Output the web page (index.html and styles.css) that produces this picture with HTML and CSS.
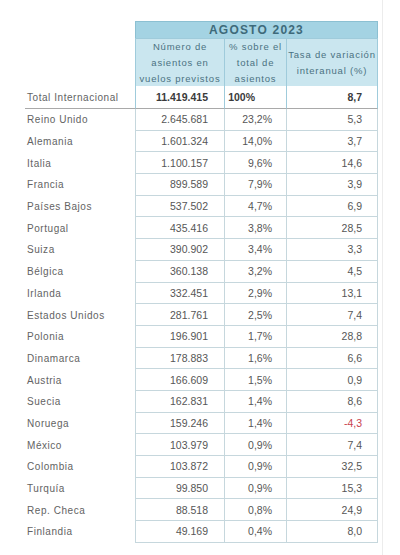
FILE: index.html
```html
<!DOCTYPE html>
<html lang="es">
<head>
<meta charset="utf-8">
<title>Agosto 2023</title>
<link rel="stylesheet" href="styles.css">
</head>
<body>
<div class="page">
  <div class="sheet">
    <div class="corner"></div>
    <div class="month">AGOSTO 2023</div>
    <div class="sub">Número de<br>asientos en<br>vuelos previstos</div>
    <div class="sub">% sobre el<br>total de<br>asientos</div>
    <div class="sub">Tasa de variación<br>interanual (%)</div>

    <div class="lab total-lab">Total Internacional</div>
    <div class="num c1 total">11.419.415</div>
    <div class="num c2 total pct100">100%</div>
    <div class="num c3 total">8,7</div>

    <div class="lab">Reino Unido</div><div class="num c1">2.645.681</div><div class="num c2">23,2%</div><div class="num c3">5,3</div>
    <div class="lab">Alemania</div><div class="num c1">1.601.324</div><div class="num c2">14,0%</div><div class="num c3">3,7</div>
    <div class="lab">Italia</div><div class="num c1">1.100.157</div><div class="num c2">9,6%</div><div class="num c3">14,6</div>
    <div class="lab">Francia</div><div class="num c1">899.589</div><div class="num c2">7,9%</div><div class="num c3">3,9</div>
    <div class="lab">Países Bajos</div><div class="num c1">537.502</div><div class="num c2">4,7%</div><div class="num c3">6,9</div>
    <div class="lab">Portugal</div><div class="num c1">435.416</div><div class="num c2">3,8%</div><div class="num c3">28,5</div>
    <div class="lab">Suiza</div><div class="num c1">390.902</div><div class="num c2">3,4%</div><div class="num c3">3,3</div>
    <div class="lab">Bélgica</div><div class="num c1">360.138</div><div class="num c2">3,2%</div><div class="num c3">4,5</div>
    <div class="lab">Irlanda</div><div class="num c1">332.451</div><div class="num c2">2,9%</div><div class="num c3">13,1</div>
    <div class="lab">Estados Unidos</div><div class="num c1">281.761</div><div class="num c2">2,5%</div><div class="num c3">7,4</div>
    <div class="lab">Polonia</div><div class="num c1">196.901</div><div class="num c2">1,7%</div><div class="num c3">28,8</div>
    <div class="lab">Dinamarca</div><div class="num c1">178.883</div><div class="num c2">1,6%</div><div class="num c3">6,6</div>
    <div class="lab">Austria</div><div class="num c1">166.609</div><div class="num c2">1,5%</div><div class="num c3">0,9</div>
    <div class="lab">Suecia</div><div class="num c1">162.831</div><div class="num c2">1,4%</div><div class="num c3">8,6</div>
    <div class="lab">Noruega</div><div class="num c1">159.246</div><div class="num c2">1,4%</div><div class="num c3 neg">-4,3</div>
    <div class="lab">México</div><div class="num c1">103.979</div><div class="num c2">0,9%</div><div class="num c3">7,4</div>
    <div class="lab">Colombia</div><div class="num c1">103.872</div><div class="num c2">0,9%</div><div class="num c3">32,5</div>
    <div class="lab">Turquía</div><div class="num c1">99.850</div><div class="num c2">0,9%</div><div class="num c3">15,3</div>
    <div class="lab">Rep. Checa</div><div class="num c1">88.518</div><div class="num c2">0,8%</div><div class="num c3">24,9</div>
    <div class="lab">Finlandia</div><div class="num c1">49.169</div><div class="num c2">0,4%</div><div class="num c3">8,0</div>
  </div>
</div>
</body>
</html>
```

FILE: styles.css
```css
html, body {
  margin: 0;
  padding: 0;
  background: #ffffff;
}

.page {
  width: 383px;
  height: 555px;
  box-sizing: border-box;
  border-right: 1px solid #ececec;
  padding-top: 21px;
  padding-left: 25px;
}

.sheet {
  display: grid;
  grid-template-columns: 110px 90px 62px 91px;
  grid-template-rows: 17px 48px 23px;
  grid-auto-rows: 21.7px;
  font-family: "Liberation Sans", Arial, sans-serif;
}

.corner {
  grid-column: 1;
  grid-row: 1 / span 2;
}

.month {
  grid-column: 2 / span 3;
  box-sizing: border-box;
  background: #a4d3e3;
  border: 1px solid #8cc0d2;
  border-bottom: none;
  color: #3e6a7a;
  font-size: 12px;
  font-weight: bold;
  letter-spacing: 1.2px;
  text-align: center;
  line-height: 16px;
}

.sub {
  box-sizing: border-box;
  background: #cae6ef;
  border-right: 1px solid #9fcbdb;
  border-top: 1px solid #9fcbdb;
  color: #4b7282;
  font-size: 9.5px;
  letter-spacing: 0.8px;
  line-height: 16px;
  text-align: center;
  display: flex;
  align-items: center;
  justify-content: center;
}

.sub:nth-child(3) { border-left: 1px solid #9fcbdb; }

.lab {
  color: #636363;
  font-size: 10px;
  letter-spacing: 0.55px;
  padding-left: 2px;
  display: flex;
  align-items: center;
}

.total-lab {
  border-bottom: 1px solid #a9a9a9;
}

.num {
  box-sizing: border-box;
  border-right: 1px solid #c6d7dd;
  border-bottom: 1px solid #c6d7dd;
  color: #565656;
  font-size: 10.5px;
  display: flex;
  align-items: center;
  justify-content: flex-end;
}

.c1 { border-left: 1px solid #c6d7dd; padding-right: 16px; }
.c2 { padding-right: 14px; }
.c3 { padding-right: 15px; }

.total {
  font-weight: bold;
  color: #3a3a3a;
  border-bottom-color: #a9a9a9;
  border-right-color: #9fcbdb;
}

.total.c1 { border-left-color: #9fcbdb; }

.pct100 { padding-right: 31px; }

.neg { color: #c8414e; }
```
